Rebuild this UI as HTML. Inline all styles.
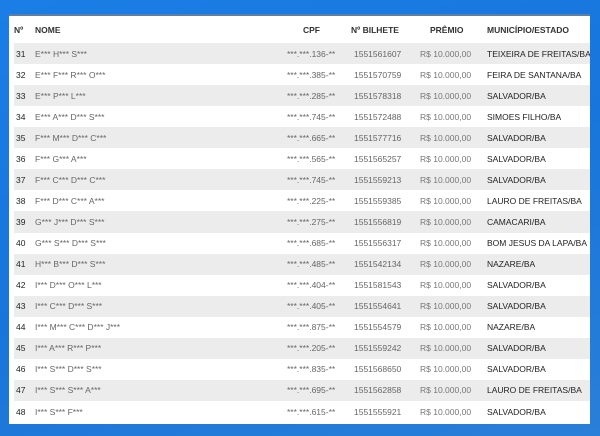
<!DOCTYPE html>
<html><head><meta charset="utf-8"><style>
html,body{margin:0;padding:0;width:600px;height:436px;overflow:hidden}
body{background:linear-gradient(160deg,#1a7ee6 0%,#1875db 50%,#2a7fd8 100%);font-family:"Liberation Sans",sans-serif;position:relative}
.panel{position:absolute;left:9px;top:14px;width:581px;height:410px;background:#fff;overflow:hidden;border-top:2px solid #5b7fa6;box-sizing:border-box}
.hdr{position:absolute;top:0;left:0;width:100%;height:27px;font-size:8.5px;font-weight:bold;color:#333}
.hdr span,.row span{position:absolute;top:50%;transform:translateY(-50%);white-space:nowrap}
.row{position:absolute;left:5px;width:576px;height:21.06px;font-size:8.5px;color:#555}
.row.g{background:#ececec}
.n{left:2px;color:#222}
.nm{left:21px;color:#666}
.cpf{left:273px;color:#666}
.b{left:340px;color:#666}
.p{left:406px;color:#777}
.m{left:473px;color:#222}
</style></head><body>
<div class="panel">
<div class="hdr"><span style="left:5px">Nº</span><span style="left:26px">NOME</span><span style="left:294px">CPF</span><span style="left:342px">Nº BILHETE</span><span style="left:421px">PRÊMIO</span><span style="left:478px">MUNICÍPIO/ESTADO</span></div>
<div class="row g" style="top:27px"><span class="n">31</span><span class="nm">E*** H*** S***</span><span class="cpf">***.***.136-**</span><span class="b">1551561607</span><span class="p">R$ 10.000,00</span><span class="m">TEIXEIRA DE FREITAS/BA</span></div>
<div class="row" style="top:48.06px"><span class="n">32</span><span class="nm">E*** F*** R*** O***</span><span class="cpf">***.***.385-**</span><span class="b">1551570759</span><span class="p">R$ 10.000,00</span><span class="m">FEIRA DE SANTANA/BA</span></div>
<div class="row g" style="top:69.12px"><span class="n">33</span><span class="nm">E*** P*** L***</span><span class="cpf">***.***.285-**</span><span class="b">1551578318</span><span class="p">R$ 10.000,00</span><span class="m">SALVADOR/BA</span></div>
<div class="row" style="top:90.18px"><span class="n">34</span><span class="nm">E*** A*** D*** S***</span><span class="cpf">***.***.745-**</span><span class="b">1551572488</span><span class="p">R$ 10.000,00</span><span class="m">SIMOES FILHO/BA</span></div>
<div class="row g" style="top:111.24px"><span class="n">35</span><span class="nm">F*** M*** D*** C***</span><span class="cpf">***.***.665-**</span><span class="b">1551577716</span><span class="p">R$ 10.000,00</span><span class="m">SALVADOR/BA</span></div>
<div class="row" style="top:132.3px"><span class="n">36</span><span class="nm">F*** G*** A***</span><span class="cpf">***.***.565-**</span><span class="b">1551565257</span><span class="p">R$ 10.000,00</span><span class="m">SALVADOR/BA</span></div>
<div class="row g" style="top:153.36px"><span class="n">37</span><span class="nm">F*** C*** D*** C***</span><span class="cpf">***.***.745-**</span><span class="b">1551559213</span><span class="p">R$ 10.000,00</span><span class="m">SALVADOR/BA</span></div>
<div class="row" style="top:174.42px"><span class="n">38</span><span class="nm">F*** D*** C*** A***</span><span class="cpf">***.***.225-**</span><span class="b">1551559385</span><span class="p">R$ 10.000,00</span><span class="m">LAURO DE FREITAS/BA</span></div>
<div class="row g" style="top:195.48px"><span class="n">39</span><span class="nm">G*** J*** D*** S***</span><span class="cpf">***.***.275-**</span><span class="b">1551556819</span><span class="p">R$ 10.000,00</span><span class="m">CAMACARI/BA</span></div>
<div class="row" style="top:216.54px"><span class="n">40</span><span class="nm">G*** S*** D*** S***</span><span class="cpf">***.***.685-**</span><span class="b">1551556317</span><span class="p">R$ 10.000,00</span><span class="m">BOM JESUS DA LAPA/BA</span></div>
<div class="row g" style="top:237.6px"><span class="n">41</span><span class="nm">H*** B*** D*** S***</span><span class="cpf">***.***.485-**</span><span class="b">1551542134</span><span class="p">R$ 10.000,00</span><span class="m">NAZARE/BA</span></div>
<div class="row" style="top:258.66px"><span class="n">42</span><span class="nm">I*** D*** O*** L***</span><span class="cpf">***.***.404-**</span><span class="b">1551581543</span><span class="p">R$ 10.000,00</span><span class="m">SALVADOR/BA</span></div>
<div class="row g" style="top:279.72px"><span class="n">43</span><span class="nm">I*** C*** D*** S***</span><span class="cpf">***.***.405-**</span><span class="b">1551554641</span><span class="p">R$ 10.000,00</span><span class="m">SALVADOR/BA</span></div>
<div class="row" style="top:300.78px"><span class="n">44</span><span class="nm">I*** M*** C*** D*** J***</span><span class="cpf">***.***.875-**</span><span class="b">1551554579</span><span class="p">R$ 10.000,00</span><span class="m">NAZARE/BA</span></div>
<div class="row g" style="top:321.84px"><span class="n">45</span><span class="nm">I*** A*** R*** P***</span><span class="cpf">***.***.205-**</span><span class="b">1551559242</span><span class="p">R$ 10.000,00</span><span class="m">SALVADOR/BA</span></div>
<div class="row" style="top:342.9px"><span class="n">46</span><span class="nm">I*** S*** D*** S***</span><span class="cpf">***.***.835-**</span><span class="b">1551568650</span><span class="p">R$ 10.000,00</span><span class="m">SALVADOR/BA</span></div>
<div class="row g" style="top:363.96px"><span class="n">47</span><span class="nm">I*** S*** S*** A***</span><span class="cpf">***.***.695-**</span><span class="b">1551562858</span><span class="p">R$ 10.000,00</span><span class="m">LAURO DE FREITAS/BA</span></div>
<div class="row" style="top:385.02px"><span class="n">48</span><span class="nm">I*** S*** F***</span><span class="cpf">***.***.615-**</span><span class="b">1551555921</span><span class="p">R$ 10.000,00</span><span class="m">SALVADOR/BA</span></div>
</div>
</body></html>
